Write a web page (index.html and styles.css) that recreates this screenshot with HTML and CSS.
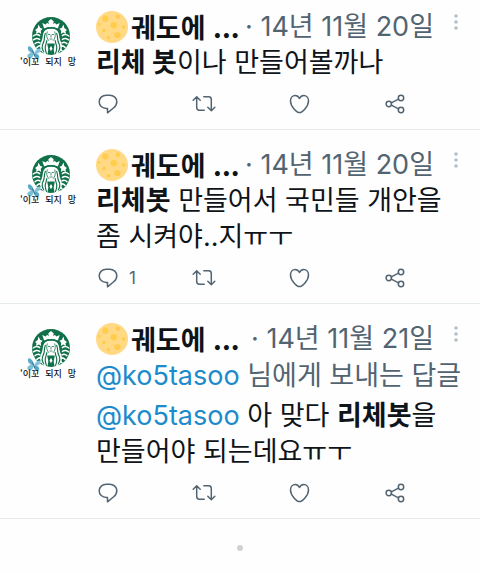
FILE: index.html
```html
<!DOCTYPE html>
<html lang="ko">
<head>
  <meta charset="UTF-8">
  <meta name="viewport" content="width=device-width, initial-scale=1.0">
  <title>리체봇</title>
  <link rel="stylesheet" href="styles.css">
</head>
<body>
  <!-- shared icons -->
  <svg class="sprite" aria-hidden="true">
    <symbol id="siren" viewBox="0 0 100 100">
      <circle cx="50" cy="50" r="50" fill="#10704a"/>
      <g fill="none" stroke="#fff" stroke-width="4" stroke-linecap="round">
        <path d="M3 50q10-7 17-1M4 60q9-6 16-1M8 70q7-6 13-2M13 80q6-6 11-3M21 89q4-6 8-5"/>
        <path d="M97 50q-10-7-17-1M96 60q-9-6-16-1M92 70q-7-6-13-2M87 80q-6-6-11-3M79 89q-4-6-8-5"/>
      </g>
      <path d="M50 30c-17 0-21 10-22 22-1 12-9 18-6 30 2 8 8 14 12 17l6 1 3-14-3-16h20l-3 16 3 14 6-1c4-3 10-9 12-17 3-12-5-18-6-30-1-12-5-22-22-22z" fill="#fff"/>
      <path d="M8 34l7-5 2-9 5 9 6 2-5 5 1 9-6-4-8 4 2-7zM92 34l-7-5-2-9-5 9-6 2 5 5-1 9 6-4 8 4-2-7z" fill="#fff"/>
      <path d="M32 30l-5-14 9 4 4-5 4 4-1-8 7-6 7 6-1 8 4-4 4 5 9-4-5 14q-18-7-36 0z" fill="#fff"/>
      <path d="M33 32q17-7 34 0" fill="none" stroke="#10704a" stroke-width="3"/>
      <g fill="none" stroke="#10704a" stroke-width="3" stroke-linecap="round">
        <path d="M35 43c-4 12-1 19-6 27-4 8-2 16 2 22M39 62c-1 9-5 13-4 21 0 6 2 9 3 13"/>
        <path d="M65 43c4 12 1 19 6 27 4 8 2 16-2 22M61 62c1 9 5 13 4 21 0 6-2 9-3 13"/>
        <path d="M40 39c-3 9-1 18 4 23M60 39c3 9 1 18-4 23" stroke-width="2"/>
        <path d="M43 46h4M53 46h4M50 48v5M47 58h6" stroke-width="2"/>
      </g>
      <path d="M50 76l4 7-4 7-4-7z" fill="#fff"/>
    </symbol>
    <symbol id="butterfly" viewBox="0 0 32 32">
      <path d="M16 17C15 7 8 1 5 3s-1 13 11 14z" fill="#5aa9c6"/>
      <path d="M16 17C18 9 27 5 29 8s-3 12-13 9z" fill="#86c6da"/>
      <path d="M16 17C8 14 1 19 3 24s11 4 13-7z" fill="#7dbfd5"/>
      <path d="M16 17c8-1 12 5 10 9s-10 3-10-9z" fill="#5aa9c6"/>
      <path d="M13 11l5 12" fill="none" stroke="#34748f" stroke-width="2"/>
    </symbol>
    <symbol id="moon" viewBox="0 0 36 36">
      <circle cx="18" cy="18" r="18" fill="#ffd983"/>
      <g fill="#ffcc4d">
        <circle cx="10.5" cy="8.5" r="3.5"/>
        <circle cx="20" cy="16" r="3.5"/>
        <circle cx="24.5" cy="6.5" r="2.5"/>
        <circle cx="9" cy="22" r="2"/>
        <circle cx="24" cy="27" r="3.5"/>
        <circle cx="31" cy="18" r="2"/>
        <circle cx="14" cy="30" r="2"/>
        <circle cx="3.5" cy="15" r="1.5"/>
      </g>
    </symbol>
    <symbol id="reply" viewBox="0 0 24 24">
      <path d="M11.500 20.800v-4.400H10.300C6.200 16.400 3.200 13.600 3.200 9.900S6.200 3.200 10.300 3.200h3.300c4.200 0 7.200 2.900 7.200 6.500 0 2.500-1.200 4.600-3.400 6.300z"/>
    </symbol>
    <symbol id="retweet" viewBox="0 0 24 24">
      <path d="M1.200 8.300l3.500-3.500 3.500 3.500M4.700 5v10.500c0 1.700 1 2.700 2.700 2.700h4.800M15.800 15.300l3.500 3.500 3.500-3.500M19.300 18.500V7.500c0-1.700-1-2.700-2.700-2.700h-4.800"/>
    </symbol>
    <symbol id="like" viewBox="0 0 24 24">
      <path d="M11.500 20.600C9 20.600 2.500 14.700 2.500 8.900c0-3.200 2.200-5.400 4.700-5.400 2 0 3.400 1.200 4.300 3 .9-1.800 2.300-3 4.300-3 2.500 0 4.700 2.200 4.700 5.400 0 5.800-6.500 11.700-9 11.700z"/>
    </symbol>
    <symbol id="share" viewBox="0 0 24 24">
      <circle cx="4.800" cy="12" r="2.700"/>
      <circle cx="17" cy="6" r="2.700"/>
      <circle cx="17" cy="18" r="2.700"/>
      <path d="M7.300 10.800l7.200-3.600M7.300 13.200l7.200 3.600"/>
    </symbol>
    <symbol id="more" viewBox="0 0 6 18">
      <circle cx="3" cy="3" r="1.800"/>
      <circle cx="3" cy="9" r="1.800"/>
      <circle cx="3" cy="15" r="1.800"/>
    </symbol>
  </svg>

  <main class="timeline">
    <article class="tweet">
      <div class="avatar">
        <svg class="logo"><use href="#siren"/></svg>
        <svg class="butterfly"><use href="#butterfly"/></svg>
        <div class="caption"><span>'이꼬</span> <span>되지</span> <span>망</span></div>
      </div>
      <div class="content">
        <header class="tweet-head">
          <svg class="moon"><use href="#moon"/></svg>
          <strong class="name">궤도에 ...</strong>
          <span class="date">· 14년 11월 20일</span>
          <button class="more" aria-label="더 보기"><svg><use href="#more"/></svg></button>
        </header>
        <p class="text"><b>리체 봇</b>이나 만들어볼까나</p>
        <div class="actions">
          <button aria-label="답글"><svg><use href="#reply"/></svg></button>
          <button aria-label="리트윗"><svg><use href="#retweet"/></svg></button>
          <button aria-label="마음에 들어요"><svg><use href="#like"/></svg></button>
          <button aria-label="공유"><svg><use href="#share"/></svg></button>
        </div>
      </div>
    </article>

    <article class="tweet">
      <div class="avatar">
        <svg class="logo"><use href="#siren"/></svg>
        <svg class="butterfly"><use href="#butterfly"/></svg>
        <div class="caption"><span>'이꼬</span> <span>되지</span> <span>망</span></div>
      </div>
      <div class="content">
        <header class="tweet-head">
          <svg class="moon"><use href="#moon"/></svg>
          <strong class="name">궤도에 ...</strong>
          <span class="date">· 14년 11월 20일</span>
          <button class="more" aria-label="더 보기"><svg><use href="#more"/></svg></button>
        </header>
        <p class="text"><b>리체봇</b> 만들어서 국민들 개안을 좀 시켜야..지ㅠㅜ</p>
        <div class="actions">
          <button aria-label="답글"><svg><use href="#reply"/></svg><span>1</span></button>
          <button aria-label="리트윗"><svg><use href="#retweet"/></svg></button>
          <button aria-label="마음에 들어요"><svg><use href="#like"/></svg></button>
          <button aria-label="공유"><svg><use href="#share"/></svg></button>
        </div>
      </div>
    </article>

    <article class="tweet">
      <div class="avatar">
        <svg class="logo"><use href="#siren"/></svg>
        <svg class="butterfly"><use href="#butterfly"/></svg>
        <div class="caption"><span>'이꼬</span> <span>되지</span> <span>망</span></div>
      </div>
      <div class="content">
        <header class="tweet-head">
          <svg class="moon"><use href="#moon"/></svg>
          <strong class="name">궤도에 ...</strong>
          <span class="date">· 14년 11월 21일</span>
          <button class="more" aria-label="더 보기"><svg><use href="#more"/></svg></button>
        </header>
        <p class="reply-to"><a href="#">@ko5tasoo</a> 님에게 보내는 답글</p>
        <p class="text"><a href="#">@ko5tasoo</a> 아 맞다 <b>리체봇</b>을 만들어야 되는데요ㅠㅜ</p>
        <div class="actions">
          <button aria-label="답글"><svg><use href="#reply"/></svg></button>
          <button aria-label="리트윗"><svg><use href="#retweet"/></svg></button>
          <button aria-label="마음에 들어요"><svg><use href="#like"/></svg></button>
          <button aria-label="공유"><svg><use href="#share"/></svg></button>
        </div>
      </div>
    </article>
  </main>

  <footer class="timeline-end"><span class="end-dot"></span></footer>
</body>
</html>
```

FILE: styles.css
```css
* {
  box-sizing: border-box;
}
body {
  margin: 0;
  background: #fefefe;
  color: #0f1419;
  font-family: Inter, "Noto Sans CJK KR", sans-serif;
  font-size: 27px;
  line-height: 36px;
}
p {
  margin: 0;
}
a {
  color: #1d8bcb;
  text-decoration: none;
}
button {
  display: flex;
  align-items: center;
  padding: 0;
  border: none;
  background: none;
  color: #536471;
  font: inherit;
  cursor: pointer;
}
.sprite {
  position: absolute;
  width: 0;
  height: 0;
}
.tweet {
  display: flex;
  padding: 17px 0 13px;
  border-bottom: 1px solid #e6ebed;
}
.tweet:first-child {
  padding-top: 9px;
}
.avatar {
  position: relative;
  flex: none;
  width: 76px;
  margin: 8px 0 0 20px;
}
.logo {
  display: block;
  width: 38px;
  height: 38px;
  margin-left: 12px;
}
.butterfly {
  position: absolute;
  left: 6px;
  top: 28px;
  width: 16px;
  height: 16px;
}
.caption {
  position: relative;
  display: flex;
  gap: 6px;
  font-family: "Noto Sans CJK KR", sans-serif;
  font-size: 9px;
  line-height: 14px;
  font-weight: 500;
  white-space: nowrap;
}
.content {
  flex: 1;
  min-width: 0;
}
.tweet-head {
  display: flex;
  align-items: center;
  padding-right: 21px;
}
.moon {
  flex: none;
  width: 32px;
  height: 32px;
  margin-right: 3px;
}
.name {
  flex: 1;
  font-family: "Noto Sans CJK KR", sans-serif;
  white-space: nowrap;
}
.date {
  color: #536471;
  white-space: nowrap;
}
.more {
  align-self: flex-start;
  margin: 4px 0 0 19px;
}
.more svg {
  width: 6px;
  height: 18px;
  fill: #b3bec5;
}
.text {
  padding-right: 24px;
}
.reply-to {
  color: #536471;
  margin: 1px 0 4px;
  white-space: nowrap;
}
.actions {
  display: grid;
  grid-template-columns: repeat(4, 1fr);
  margin-top: 11px;
}
.actions button {
  height: 24px;
  gap: 9px;
  font-size: 17px;
}
.actions svg {
  width: 24px;
  height: 24px;
  fill: none;
  stroke: #536471;
  stroke-width: 1.5;
  stroke-linecap: round;
  stroke-linejoin: round;
}
.timeline-end {
  display: flex;
  justify-content: center;
  padding: 26px 0 22px;
}
.end-dot {
  width: 6px;
  height: 6px;
  border-radius: 50%;
  background: #cfd2d4;
}
```
